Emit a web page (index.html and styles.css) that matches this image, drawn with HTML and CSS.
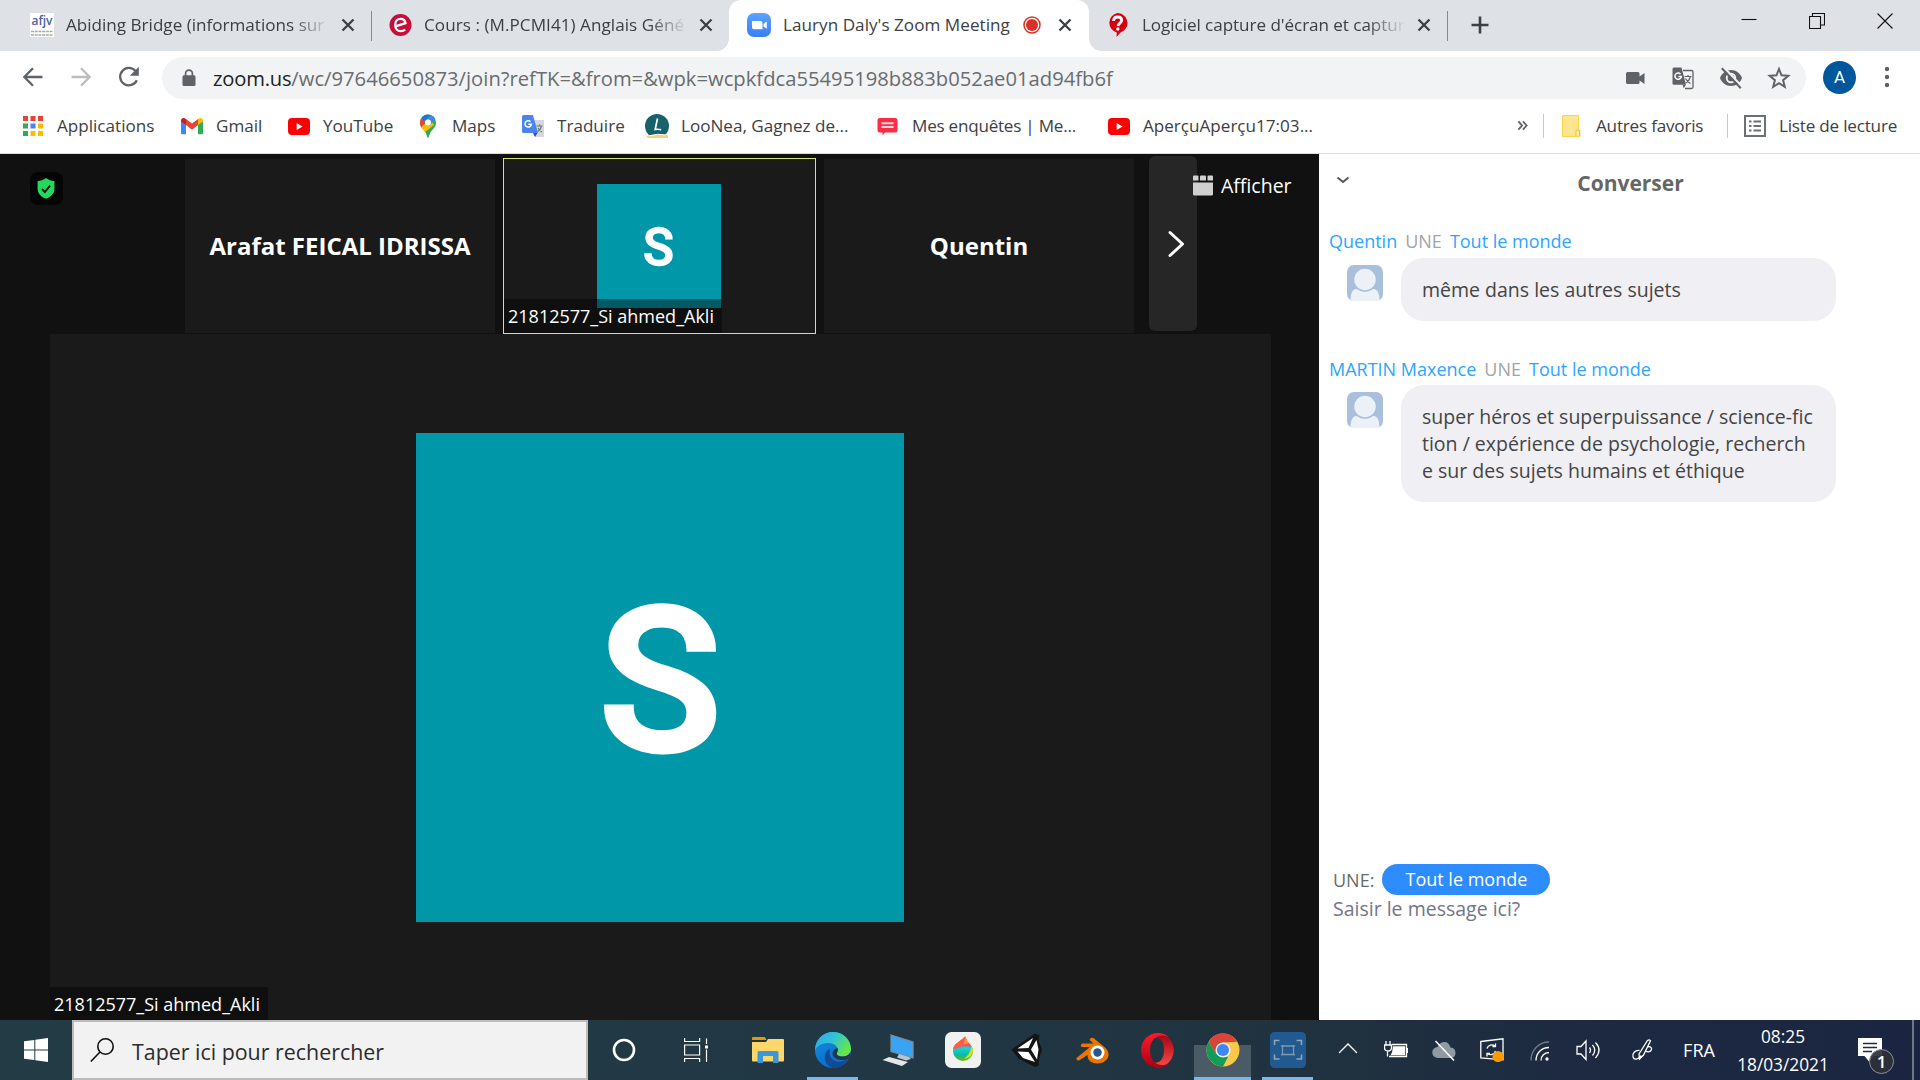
FILE: index.html
```html
<!DOCTYPE html>
<html lang="fr">
<head>
<meta charset="utf-8">
<title>Lauryn Daly's Zoom Meeting</title>
<link rel="stylesheet" href="styles.css">
</head>
<body>
<div class="screen">

<header class="tabstrip">
  <div class="tab tab-first">
    <svg class="fav" viewBox="0 0 24 24"><rect width="24" height="24" fill="#fff"/><text x="12" y="12" text-anchor="middle" class="afjv" textLength="21" lengthAdjust="spacingAndGlyphs">afjv</text><path d="M1 18.5h22M1 22h22" stroke="#a9a9a0" stroke-width="1.4" stroke-dasharray="3 .7"/></svg>
    <span class="title fade">Abiding Bridge (informations sur</span>
    <svg class="close" viewBox="0 0 16 16"><path d="M2.5 2.5l11 11m0-11l-11 11"/></svg>
  </div>
  <div class="tab">
    <svg class="fav" viewBox="0 0 24 24"><circle cx="11.500" cy="12" r="11" fill="#c70d3a"/><path d="M6.500 13.300l10-3.200c-.5-3-2.600-4.300-5-4.300-3.200 0-5.300 2.700-5.300 6.200 0 3.700 2.300 6.100 5.600 6.100 1.900 0 3.300-.6 4.300-1.700" fill="none" stroke="#fff" stroke-width="2.300"/></svg>
    <span class="title fade wide">Cours : (M.PCMI41) Anglais Géné</span>
    <svg class="close" viewBox="0 0 16 16"><path d="M2.5 2.5l11 11m0-11l-11 11"/></svg>
  </div>
  <div class="tab active">
    <svg class="fav" viewBox="0 0 24 24"><defs><linearGradient id="zg" x2="0" y2="1"><stop offset="0" stop-color="#5aa4ff"/><stop offset="1" stop-color="#3a7df6"/></linearGradient></defs><rect width="24" height="24" rx="7" fill="url(#zg)"/><path d="M5 8h8.500q2 0 2 2v6.200H7q-2 0-2-2zM16.500 11l3.300-2.600v7.300l-3.300-2.300z" fill="#fff"/></svg>
    <span class="title current">Lauryn Daly's Zoom Meeting</span>
    <svg class="rec" viewBox="0 0 18 18"><circle cx="9" cy="9" r="8" fill="#fff" stroke="#d93025" stroke-width="1.500"/><circle cx="9" cy="9" r="6" fill="#d93025"/></svg>
    <svg class="close" viewBox="0 0 16 16"><path d="M2.5 2.5l11 11m0-11l-11 11"/></svg>
  </div>
  <div class="tab tab-sep">
    <svg class="fav" viewBox="0 0 24 24"><path d="M10.500 0a10 10 0 0 1 10 10c0 4.500-3 8-7 9.500l-4 4.500.3-4.500A10 10 0 0 1 10.500 0z" fill="#d9000d"/><path d="M6.500 8c.2-2.600 1.800-4 4.200-4 2.300 0 4 1.300 4 3.200 0 2.800-3.500 3-3.700 6" fill="none" stroke="#fff" stroke-width="2.800"/><circle cx="10.800" cy="16" r="1.700" fill="#fff"/></svg>
    <span class="title fade narrow">Logiciel capture d'écran et captur</span>
    <svg class="close" viewBox="0 0 16 16"><path d="M2.5 2.5l11 11m0-11l-11 11"/></svg>
  </div>
  <div class="strip-end">
    <svg class="plus" viewBox="0 0 20 20"><path d="M10 1.500v17M1.500 10h17"/></svg>
    <div class="win">
      <svg viewBox="0 0 16 16"><path d="M.5 6.500h15"/></svg>
      <svg viewBox="0 0 16 16"><path d="M.5 3.500h11v12H.5zM3.500 3.500v-3h12v11.500h-4"/></svg>
      <svg viewBox="0 0 16 16"><path d="M.5.5l15 15m0-15l-15 15"/></svg>
    </div>
  </div>
</header>

<div class="toolbar">
  <svg class="nav" viewBox="0 0 24 24"><path d="M21.500 12H4M12 3.200L3.300 12l8.700 8.800"/></svg>
  <svg class="nav off" viewBox="0 0 24 24"><path d="M2.500 12H20M12 3.200l8.700 8.800-8.700 8.800"/></svg>
  <svg class="nav" viewBox="0 0 24 24"><path d="M19.800 15.200A8.700 8.700 0 1 1 18.500 6"/><path class="solid" d="M21.800 1.800v9h-9z"/></svg>
  <div class="omnibox">
    <svg class="lock" viewBox="0 0 14 18"><path d="M2 6.200h10q1.500 0 1.500 1.500V15.500q0 1.500-1.500 1.500H2Q.5 17 .5 15.500V7.700Q.5 6.200 2 6.200z" fill="#5f6368"/><path d="M3.600 7V4.500a3.400 3.400 0 0 1 6.800 0V7" fill="none" stroke="#5f6368" stroke-width="1.700"/></svg>
    <span class="url"><b>zoom.us</b>/wc/97646650873/join?refTK=&amp;from=&amp;wpk=wcpkfdca55495198b883b052ae01ad94fb6f</span>
    <div class="omni-icons">
      <svg viewBox="0 0 24 24"><path d="M4.500 6H15q1.500 0 1.500 1.500v3L21.500 7v11l-5-3.500v2q0 1.500-1.500 1.500H4.500Q3 18 3 16.500v-9Q3 6 4.500 6z" fill="#5f6368"/></svg>
      <svg viewBox="0 0 24 24"><path d="M12 4.500h8.500q1.500 0 1.500 1.500v15q0 1.500-1.500 1.500H14" fill="none" stroke="#5f6368" stroke-width="1.300"/><path d="M3 1.500h7.500L15 18.800H3q-1.500 0-1.500-1.500V3q0-1.500 1.500-1.500z" fill="#5f6368"/><path d="M11.500 18.800h3.500l-2.300 3.500z" fill="#5f6368"/><path d="M9.500 8a3.200 3.200 0 1 0 .8 2.600H7.300" fill="none" stroke="#fff" stroke-width="1.500"/><path d="M13.500 10.500h7M17 9v1.500M19.500 10.500c-.7 3-2.500 5-4.700 6.500M14.500 12.500c1 2 3 3.800 5 5" fill="none" stroke="#5f6368" stroke-width="1.200"/></svg>
      <svg viewBox="0 0 24 24"><path d="M12 4c5 0 9.300 3.300 11 8-1.700 4.700-6 8-11 8S2.700 16.700 1 12C2.700 7.300 7 4 12 4z" fill="#5f6368"/><circle cx="12" cy="12" r="4.300" fill="none" stroke="#f1f3f4" stroke-width="1.900"/><path d="M4.300.8l19 20" stroke="#f1f3f4" stroke-width="2.200"/><path d="M2.800 2.200l19 20" stroke="#5f6368" stroke-width="2"/></svg>
      <svg viewBox="0 0 24 24"><path d="M12 3l2.500 6.300 6.800.5-5.200 4.400 1.700 6.600-5.800-3.600-5.800 3.600 1.700-6.600-5.200-4.400 6.800-.5z" fill="none" stroke="#5f6368" stroke-width="2"/></svg>
    </div>
  </div>
  <div class="avatar">A</div>
  <svg class="dots" viewBox="0 0 6 22"><circle cx="3" cy="3" r="2.200"/><circle cx="3" cy="11" r="2.200"/><circle cx="3" cy="19" r="2.200"/></svg>
</div>

<nav class="bookmarks">
  <a><svg viewBox="0 0 24 24"><path fill="#ea4335" d="M2 2h5v5H2zM9.500 2h5v5h-5zM17 2h5v5h-5z"/><path fill="#34a853" d="M2 9.500h5v5H2zM2 17h5v5H2z"/><path fill="#4285f4" d="M9.500 9.500h5v5h-5z"/><path fill="#fbbc04" d="M17 9.500h5v5h-5zM9.500 17h5v5h-5zM17 17h5v5h-5z"/></svg>Applications</a>
  <a><svg viewBox="0 0 24 24"><path fill="#4285f4" d="M1 6v13q0 1.300 1.300 1.300H6V10z"/><path fill="#34a853" d="M18 20.300h3.700q1.300 0 1.300-1.300V6l-5 4z"/><path fill="#ea4335" d="M6 5l6 4.600L18 5v6l-6 4.700L6 11z"/><path fill="#c5221f" d="M1 6.500c0-2.700 2.800-3.500 5-1.500v6L1 7.500z"/><path fill="#fbbc04" d="M23 6.500c0-2.700-2.800-3.500-5-1.500v6l5-3.500z"/></svg>Gmail</a>
  <a><svg viewBox="0 0 24 24"><rect x="1" y="4" width="22" height="17" rx="4" fill="#f00"/><path d="M9.700 9v7l5.800-3.500z" fill="#fff"/></svg>YouTube</a>
  <a><svg viewBox="0 0 24 24"><path fill="#34a853" d="M12 24c-.9 0-1-3.500-3-6.200C6.500 14.500 4 12.500 4 8.500a8 8 0 0 1 16 0c0 4-2.500 6-5 9.300-2 2.700-2.100 6.200-3 6.200z"/><path fill="#fbbc04" d="M5 13l8.500-9L18 11l-9 7c-1.500-2-3-3.400-4-5z"/><path fill="#ea4335" d="M5.500 4L10 8l-4.800 5.200C3.800 10.500 3.300 7 5.500 4z"/><path fill="#1a73e8" d="M5.500 4A8 8 0 0 1 14.500.9L8.500 7z"/><path fill="#4285f4" d="M14.500.9A8 8 0 0 1 19.300 5l-6 7-1-6z"/><circle cx="12" cy="8.500" r="3" fill="#fff"/></svg>Maps</a>
  <a><svg viewBox="0 0 24 24"><path fill="#d5d7da" d="M12 6h11v17H14z"/><path fill="#4a84f0" d="M2.500 1H12l5 18H2.500Q1 19 1 17.500v-15Q1 1 2.500 1z"/><path fill="#2a4fc0" d="M12 19h4.500L14 23z"/><path d="M9.500 7.600a3.200 3.200 0 1 0 .9 2.600H7.300" fill="none" stroke="#fff" stroke-width="1.500"/><path d="M15.500 12h6M18.500 10.500V12M20.500 12c-.7 2.500-2 4.500-3.500 5.500M17 14c1 1.500 2.500 3 4 4" fill="none" stroke="#6b7a80" stroke-width="1.200"/></svg>Traduire</a>
  <a><svg viewBox="0 0 24 24"><circle cx="12" cy="12" r="12" fill="#17616a"/><path d="M1 22q11-3 22-.5V24H3z" fill="#f1d27a"/><path d="M4 22q9-3 17-1" stroke="#fff" fill="none"/><path d="M12.500 4.500l-2.300 11q3-.6 6 .3" stroke="#fff" stroke-width="1.700" fill="none"/></svg>LooNea, Gagnez de...</a>
  <a><svg viewBox="0 0 24 24"><path fill="#fb2c45" d="M4 4h15q2.500 0 2.500 2.500V16q0 2.500-2.500 2.500H9L6.500 21.500V18.500H4Q1.500 18.500 1.500 16V6.500Q1.500 4 4 4z"/><path d="M5.500 9.300h12M5.500 13h12" stroke="#ffd9de" stroke-width="1.900"/></svg><span class="tight">Mes enquêtes | Me...</span></a>
  <a><svg viewBox="0 0 24 24"><rect x="1" y="4" width="22" height="17" rx="4" fill="#f00"/><path d="M9.700 9v7l5.800-3.500z" fill="#fff"/></svg><span>AperçuAperçu17:03...</span></a>
  <div class="bm-right">
    <svg class="more" viewBox="0 0 12 12"><path d="M1.500 1.500L5.500 6l-4 4.500M6.500 1.500L10.500 6l-4 4.500"/></svg>
    <i class="vsep"></i>
    <svg class="folder" viewBox="0 0 20 24"><path d="M1.500 1.500h16v15h1.500v6H1.500z" fill="#ffe590" stroke="#fbd54c"/><path d="M15 22v-4.500q0-1.500 1.500-1.500h.5q1.500 0 1.500 1.500V22" fill="#fff0b8" stroke="#e9bd2c"/></svg>
    <span class="bm-other">Autres favoris</span>
    <i class="vsep"></i>
    <svg class="list" viewBox="0 0 22 22"><path d="M1 1h20v20H1z" fill="#fff" stroke="#6b7075" stroke-width="2"/><path d="M5 6.500h2.500M5 11h2.500M5 15.500h2.500M9.500 6.500H17M9.500 11H17M9.500 15.500H17" stroke="#6b7075" stroke-width="2"/></svg>
    <span class="bm-list">Liste de lecture</span>
  </div>
</nav>

<main class="zoom">
  <section class="meeting">
    <div class="filmrow">
      <div class="shield"><svg viewBox="0 0 18 22"><path d="M9 0c2.500 2.200 5.500 3 8.800 3.200v8.300c0 5-4 8.500-8.800 10.300C4.200 20 .2 16.500.2 11.500V3.200C3.500 3 6.500 2.200 9 0z" fill="#23d959"/><path d="M4.800 11.500l3 3.200 5.500-6.700" fill="none" stroke="#0a0a0a" stroke-width="1.900"/></svg></div>
      <div class="tile">Arafat FEICAL IDRISSA</div>
      <div class="tile speaking"><div class="pic small">S</div><span class="nametag">21812577_Si ahmed_Akli</span></div>
      <div class="tile third">Quentin</div>
      <div class="next"><svg viewBox="0 0 18 28"><path d="M3 2.500L15.500 14 3 25.500"/></svg></div>
      <div class="view"><svg viewBox="0 0 20 21"><path d="M0 1.500Q0 .5 1 .5h3.500q1 0 1 1v4H0zM7 1.500q0-1 1-1h4q1 0 1 1v4H7zM14.500 1.500q0-1 1-1H19q1 0 1 1v4h-5.500zM0 7.500h20v11.500q0 1.500-1.500 1.500h-17Q0 20.500 0 19z" fill="#d0d0d0"/></svg>Afficher</div>
    </div>
    <div class="stage"><div class="pic big">S</div><span class="nametag">21812577_Si ahmed_Akli</span></div>
  </section>

  <aside class="chat">
    <div class="chat-head"><svg viewBox="0 0 14 8"><path d="M1.500 1.500L7 6l5.500-4.500"/></svg><h2>Converser</h2></div>
    <div class="msg">
      <p class="who"><em>Quentin</em><span>UNE</span><em>Tout le monde</em></p>
      <div class="line"><svg class="user" viewBox="0 0 36 36"><rect width="36" height="36" rx="7" fill="#a9bfdb"/><path d="M3.500 36c0-7 1.500-12 6-12 2.500 0 5 2.500 8.500 2.500s6-2.500 8.500-2.500c4.500 0 6 5 6 12z" fill="#ebf1f7"/><circle cx="18" cy="14.500" r="11.500" fill="#ebf1f7" stroke="#a9bfdb" stroke-width="1.500"/></svg><div class="bubble">même dans les autres sujets</div></div>
    </div>
    <div class="msg">
      <p class="who"><em>MARTIN Maxence</em><span>UNE</span><em>Tout le monde</em></p>
      <div class="line"><svg class="user" viewBox="0 0 36 36"><rect width="36" height="36" rx="7" fill="#a9bfdb"/><path d="M3.500 36c0-7 1.500-12 6-12 2.500 0 5 2.500 8.500 2.500s6-2.500 8.500-2.500c4.500 0 6 5 6 12z" fill="#ebf1f7"/><circle cx="18" cy="14.500" r="11.500" fill="#ebf1f7" stroke="#a9bfdb" stroke-width="1.500"/></svg><div class="bubble">super héros et superpuissance / science-fic<br>tion / expérience de psychologie, recherch<br>e sur des sujets humains et éthique</div></div>
    </div>
    <div class="compose">
      <div class="to">UNE:<span class="pill">Tout le monde</span></div>
      <div class="placeholder">Saisir le message ici?</div>
    </div>
  </aside>
</main>

<footer class="taskbar">
  <div class="start"><svg viewBox="0 0 24 24"><path fill="#fff" d="M0 3.300l10.300-1.400v9.600H0zM11.300 1.700L24 0v11.500H11.300zM0 12.500h10.300v9.600L0 20.700zM11.300 12.500H24V24l-12.700-1.700z"/></svg></div>
  <div class="search"><svg viewBox="0 0 24 24"><circle cx="15.500" cy="8.500" r="7.700"/><path d="M10 14L.8 23.500"/></svg><span>Taper ici pour rechercher</span></div>
  <div class="apps">
    <div class="app wide"><svg viewBox="0 0 24 24"><circle cx="12" cy="12" r="10" fill="none" stroke="#fff" stroke-width="2.600"/></svg></div>
    <div class="app wide"><svg viewBox="0 0 24 24" fill="none" stroke="#fff" stroke-width="1.200"><path d="M.6 0v3.500h15V0M.6 7h15v10h-15zM.6 24v-3.500h15V24M22.500.5V6M22.500 11.500V24"/><path d="M21 7.500h3v3h-3z" fill="#fff" stroke="none"/></svg></div>
    <div class="app after"><svg class="s36" viewBox="0 0 36 36"><path d="M2 6q0-1 1-1h11q1 0 1.500 1l1 2H2z" fill="#e09b00"/><path d="M2 10h14l2-3h15q1 0 1 1v20.500q0 1-1 1H3q-1 0-1-1z" fill="#fed768"/><path d="M7.500 31V20.500q0-1.500 1.500-1.500h18q1.500 0 1.500 1.500V31h-5.500v-7h-10v7z" fill="#3a96dd"/></svg></div>
    <div class="app run"><svg class="s36" viewBox="0 0 36 36"><defs><linearGradient id="e1" x1="0" y1="0" x2="1" y2=".5"><stop offset="0" stop-color="#2fa9e8"/><stop offset=".5" stop-color="#2fc2d8"/><stop offset="1" stop-color="#66e64a"/></linearGradient><linearGradient id="e2" x1="0" y1="0" x2="0.500" y2="1"><stop offset="0" stop-color="#1191e0"/><stop offset="1" stop-color="#0a6bcb"/></linearGradient></defs><circle cx="18" cy="18" r="18" fill="url(#e2)"/><path d="M14.500 20c0 7 6 11 12 9.500 3-.7 4.500-1.800 6.500-2.800C29.500 33 24 36 18 36c-6.500-1.500-9-8-8-13 .6-3 2.300-5 5-6.500z" fill="#124a97"/><path d="M36 17c0 5-4 7.500-8.500 7.500-3.500 0-5.800-1-5.800-2.500 0-1 1.300-1.500 1.300-4C23 14.500 19 11 13 11 7 11 1.500 14 0 18.500 0 8 8 0 18 0s18 7.500 18 17z" fill="url(#e1)"/><path d="M22 22.500c1 1.500 3 2 5.500 2 3.500 0 6.500-1.500 8-4.500l-1 6.200c-2 1.300-5 1.800-7.500 1.800-5 0-9-2.500-9.500-6 0-2.500 1.500-5 5-6 1.200 3-1.500 4-.5 6.500z" fill="#22384a"/></svg></div>
    <div class="app"><svg class="s36" viewBox="0 0 36 36"><path d="M11 3l22 7v16l-22-6.500z" fill="#39a3f5" stroke="#7e8b99" stroke-width="1.300"/><path d="M19 22l10 3 2 2-5 1.500-9-3z" fill="#b9c4cf"/><path d="M9 25l19 5-6 4-19.500-6z" fill="#e3e7ea"/></svg></div>
    <div class="app"><svg class="s36" viewBox="0 0 36 36"><defs><linearGradient id="m1" x1="0" y1="0" x2="0" y2="1"><stop offset="0" stop-color="#ff6a4a"/><stop offset=".36" stop-color="#ff4b55"/><stop offset=".46" stop-color="#12d6e0"/><stop offset=".75" stop-color="#0fb8a8"/><stop offset="1" stop-color="#74b800"/></linearGradient></defs><rect width="36" height="36" rx="6.500" fill="#f1f1f0"/><path d="M20 4.500c2 3 1.500 4 4 6.500 2.500 2.500 4 5 4 8a10 10 0 0 1-20 0c0-7 7-9 12-14.500z" fill="url(#m1)"/><path d="M20 4.500c2 3 1.500 4 1 6.500-3 1-4 3.500-6 5l-7 1C9 11 15.500 9.500 20 4.500z" fill="#ff5c45"/><path d="M20 4.500c2 3 1.500 4 4 6.500l-6 1.500c1.500-2.500 2.500-5 2-8z" fill="#ff9a3c"/><path d="M28 18c0 6-4 8.500-9 8.500 3-2 6-5 7.500-12 .8 1 1.500 2 1.500 3.500z" fill="#d8e100"/></svg></div>
    <div class="app"><svg class="s36" viewBox="0 0 36 36"><path d="M1.500 17.500L25 1.500l4.500 2-1 5 3.500 9-3 9.500-.5 6.500-3.500 1.500L9 27z" fill="#141414"/><path d="M7.500 16.500L23 6l-4.500 10zM7.500 19.500l11 .5L25 30l-12-4zM21 17.500L26.500 8l2 9.500-1.500 10z" fill="#fff"/></svg></div>
    <div class="app"><svg class="s36" viewBox="0 0 36 36"><path d="M1.500 26L15 15H6.500q-1.500-2 .5-3.500h11.500l-4-3.500q1-3 4-2l12 10c7 7 1 15.500-8 15.500-7 0-10-4-10-8.500L4 28.500q-3 0-2.500-2.500z" fill="#ea7600"/><circle cx="22.500" cy="20.500" r="7" fill="#fff"/><circle cx="22.500" cy="20.500" r="4.200" fill="#265787"/></svg></div>
    <div class="app"><svg class="s36" viewBox="0 0 36 36"><defs><linearGradient id="o1" x2="0" y2="1"><stop offset="0" stop-color="#ff1b2d"/><stop offset="1" stop-color="#a70014"/></linearGradient><linearGradient id="o2" x2="0" y2="1"><stop offset="0" stop-color="#9c0010"/><stop offset="1" stop-color="#ff4b4b"/></linearGradient></defs><path d="M18 1a17 17.300 0 0 1 0 34.500c-5-1-9-3.500-7-6 5 3 13 1 13-11.500S17 5 11 7c0-3 2-5 7-6z" fill="url(#o2)"/><path d="M18 1C8.500 1 1 8.500 1 18.200S8.500 35.500 18 35.500c4 0 7.500-1 10.500-4-9 4.500-18.500-1-18.500-13.300S19.500.5 28.500 5C26 2.500 22 1 18 1z" fill="url(#o1)"/></svg></div>
    <div class="app run lit"><svg class="s36" viewBox="0 0 36 36"><circle cx="18" cy="18" r="16.500" fill="#fcc84a"/><path d="M3.700 9.800A16.500 16.500 0 0 1 32.300 9.800L18 10.500l-7 11.600z" fill="#db4437"/><path d="M3.700 9.800L11 22l6.500 4.500 0 8A16.500 16.500 0 0 1 3.700 9.800z" fill="#0f9d58"/><path d="M11 22l12 3-5 9.500L10 32z" fill="#0f9d58"/><circle cx="18" cy="18" r="7.500" fill="#f3f3f3"/><circle cx="18" cy="18" r="6.100" fill="#4285f4"/></svg></div>
    <div class="app run"><svg class="s36" viewBox="0 0 36 36"><rect width="36" height="36" rx="4.500" fill="#205a91"/><path d="M4.500 13V8.500H9.500M26.500 8.500h5V13M31.500 22.500V27h-5M9.500 27h-5v-4.500" fill="none" stroke="#92a6b8" stroke-width="1.600"/><path d="M12.500 13v10.500M23.500 13v10.500M11 14h14M11 22.500h14" stroke="#8096ab" stroke-width="1.300"/></svg></div>
  </div>
  <div class="tray">
    <div class="t"><svg viewBox="0 0 24 24"><path d="M3 15l9-9 9 9"/></svg></div>
    <div class="t"><svg viewBox="0 0 24 24"><path d="M8 6.500h14.500v12H5M3.500 18.500v-5M23.500 10v5"/><path d="M2 3v3.500M6 3v3.500M.5 7h7v2.500q0 3.500-3.500 3.500T.5 9.500z"/><path d="M9.500 9h11v7.500H7.500l1.200-2z" fill="#fff"/></svg></div>
    <div class="t"><svg viewBox="0 0 24 24"><path d="M6 20a5.500 5.500 0 0 1-.5-11C7 5.500 9.500 4 12.500 4c3 0 5 2 6 5.500 3.500.3 5 2.500 5 5.500s-2 5-5 5z" fill="#8f9aa3" stroke="none"/><path d="M3.500 3L22 22.500" stroke-width="1.500"/></svg></div>
    <div class="t"><svg viewBox="0 0 24 24"><path d="M.8 3.500L23 .8v21L.8 20z"/><path d="M7 10.500a5 5 0 0 1 8-2.500M15.500 5.500V8.500h-3M15.500 13a5 5 0 0 1-8 2.500M7 18.500v-3h3"/><circle cx="18" cy="18.500" r="5.500" fill="#ff9900" stroke="none"/></svg></div>
    <div class="t"><svg viewBox="0 0 24 24"><path d="M3 22.500C3 12.500 10.500 4 21 4" stroke="#6f7c88"/><path d="M8 22.500c0-7.500 5.500-13 13-13M13 22.500c0-4.500 3.500-8 8-8"/><circle cx="19" cy="21" r="1" fill="#fff"/></svg></div>
    <div class="t"><svg viewBox="0 0 24 24"><path d="M1 8.500h4l5-5.500v18.500L5 16H1zM13.500 9.500q2 2.500 0 5.500M16.500 7q4.500 5 0 10.500M19.500 4.500q7 7.500 0 15.500"/></svg></div>
    <div class="t pen"><svg viewBox="0 0 24 24"><path d="M9 16L17.500 2.500q2-1.500 3 .3L13.500 17l-4 4zM9.500 12.500C5 12 2 15.500 3 19c1 3.500 6 2.500 8-1.500M15.500 13c3.500 2 7.500-.5 5.500-3.500-1-1-3-1-4 0"/></svg></div>
    <div class="lang">FRA</div>
    <div class="clock">08:25<br>18/03/2021</div>
    <div class="notif"><svg viewBox="0 0 24 24"><path d="M0 0h24v18h-8l-5 5.500L6.500 18H0z" fill="#fff"/><path d="M5 5.500h14M5 9.500h14M5 13.500h9" stroke="#1e2b3e" stroke-width="1.300"/></svg><span class="badge">1</span></div>
  </div>
</footer>
</div>
</body>
</html>
```
FILE: styles.css
```css
* { box-sizing: border-box; }
body {
  margin: 0;
  font-family: "Open Sans", "Noto Sans", sans-serif;
  overflow: hidden;
}
svg { display: block; flex: none; }
.screen {
  width: 1920px;
  height: 1080px;
  display: flex;
  flex-direction: column;
  background: #fff;
}

/* Tab strip */
.tabstrip {
  height: 51px;
  flex: none;
  display: grid;
  grid-template-columns: 371px 358px 360px 358px 1fr;
  background: #dee1e6;
  font-size: 17.100px;
  color: #3c4043;
}
.tab {
  position: relative;
  display: flex;
  align-items: center;
  padding: 0 15px 0 18px;
}
.tab-first { padding-left: 30px; }
.tab-first::after, .tab-sep::after {
  content: "";
  position: absolute;
  right: -1px;
  top: 11px;
  width: 1px;
  height: 30px;
  background: #85888d;
}
.tab.active {
  background: #fff;
  border-radius: 12px 12px 0 0;
}
.tab.active::before, .tab.active::after {
  content: "";
  position: absolute;
  bottom: 0;
  width: 12px;
  height: 12px;
}
.tab.active::before { left: -12px; background: radial-gradient(circle at 0 0, transparent 11.500px, #fff 12px); }
.tab.active::after { right: -12px; background: radial-gradient(circle at 100% 0, transparent 11.500px, #fff 12px); }
.fav { width: 24px; height: 24px; margin-right: 12px; margin-bottom: 1px; }
.afjv { font: 600 12.500px "Open Sans", sans-serif; fill: #4a62a0; }
.title { white-space: nowrap; padding-bottom: 2px; }
.title.fade {
  width: 260px;
  overflow: hidden;
  -webkit-mask-image: linear-gradient(90deg, #000 225px, transparent 264px);
  mask-image: linear-gradient(90deg, #000 225px, transparent 264px);
}
.title.wide { letter-spacing: .050px; margin-left: -1px; }
.title.narrow { letter-spacing: -.060px; margin-left: -1px; width: 264px; }
.title.current { letter-spacing: .040px; }
.rec { width: 18px; height: 18px; margin-left: 13px; margin-bottom: 1px; }
.close { width: 16px; height: 16px; margin-left: auto; margin-bottom: 1px; }
.tab.active .close { margin-right: 1px; }
.close path { stroke: #3c4043; stroke-width: 2.300; }
.strip-end { display: flex; justify-content: space-between; padding: 15px 27px 0 23px; }
.plus { width: 20px; height: 20px; }
.plus path { stroke: #3c4043; stroke-width: 2.600; fill: none; }
.win { display: flex; gap: 52px; margin-top: -2px; }
.win svg { width: 16px; height: 16px; }
.win path { fill: none; stroke: #111; stroke-width: 1.100; }

/* Address bar */
.toolbar {
  height: 52px;
  flex: none;
  display: flex;
  align-items: center;
  padding-left: 21px;
}
.nav { width: 24px; height: 24px; margin-right: 24px; }
.nav:nth-child(3) { margin-right: 21px; }
.nav path { fill: none; stroke: #5f6368; stroke-width: 2.300; }
.nav.off path { stroke: #babcbe; }
.nav .solid { fill: #5f6368; stroke: none; }
.omnibox {
  width: 1644px;
  height: 42px;
  margin-top: 2px;
  border-radius: 21px;
  background: #f1f3f4;
  display: flex;
  align-items: center;
  padding: 0 15px 0 20px;
}
.lock { width: 14px; height: 18px; margin-right: 17px; }
.url { font-size: 20.200px; color: #696c70; white-space: nowrap; line-height: 28px; letter-spacing: .010px; }
.url b { font-weight: 400; color: #202124; letter-spacing: -.200px; }
.omni-icons { display: flex; gap: 24px; margin-left: auto; }
.omni-icons svg { width: 24px; height: 24px; }
.avatar {
  width: 33px;
  height: 33px;
  margin-left: 17px;
  border-radius: 50%;
  background: #01579b;
  color: #fff;
  font: 17px/33px Roboto, sans-serif;
  text-align: center;
}
.dots { width: 6px; height: 22px; margin-left: 28px; fill: #5f6368; }

/* Bookmarks */
.bookmarks {
  height: 51px;
  flex: none;
  border-bottom: 1px solid #dadce0;
  display: grid;
  grid-template-columns: 159px 107px 129px 105px 124px 231px 231px 220px 1fr;
  padding: 0 21px 5px 21px;
  font-size: 17.100px;
  color: #3c4043;
}
.bookmarks a { display: flex; align-items: center; gap: 12px; white-space: nowrap; }
.bookmarks .tight { letter-spacing: -.240px; }
.bookmarks svg { width: 24px; height: 24px; }
.bm-right { display: flex; align-items: center; justify-content: flex-end; letter-spacing: -.200px; white-space: nowrap; }
.bookmarks .more { width: 11px; height: 11px; margin-right: 15px; }
.more path { fill: none; stroke: #5f6368; stroke-width: 2; }
.vsep { width: 1px; height: 24px; background: #c5c8cc; }
.bookmarks .folder { width: 20px; margin: 0 15px 0 17px; }
.bm-other { width: 131px; }
.bookmarks .list { width: 22px; height: 22px; margin: 0 13px 0 16px; }
.bm-list { width: 120px; }

/* Meeting */
.zoom { height: 866px; flex: none; display: grid; grid-template-columns: 1319px 1fr; }
.meeting { background: #111; display: flex; flex-direction: column; }
.filmrow { position: relative; height: 180px; flex: none; display: flex; }
.shield {
  width: 33px;
  height: 33px;
  margin: 18px 122px 0 30px;
  border-radius: 8px;
  background: #050505;
  display: grid;
  place-items: center;
}
.shield svg { width: 18px; height: 21px; margin-right: 1px; }
.tile {
  width: 310px;
  height: 174px;
  margin: 5px 8px 0 0;
  padding-bottom: 2px;
  background: #1a1a1a;
  color: #fff;
  font-size: 24px;
  font-weight: 700;
  display: flex;
  align-items: center;
  justify-content: center;
}
.speaking {
  position: relative;
  width: 313px;
  height: 176px;
  margin-top: 4px;
  padding: 0 2px 0 0;
  border: 1px solid #d4e66f;
}
.third { margin-right: 15px; }
.pic {
  background: #0097a8;
  color: #fff;
  font-family: Roboto, sans-serif;
  font-weight: 500;
  display: flex;
  align-items: center;
  justify-content: center;
}
.pic.small { width: 124px; height: 124px; font-size: 51px; padding-top: 2px; -webkit-text-stroke: 1.300px #fff; }
.pic.big { width: 488px; height: 489px; font-size: 201px; padding-top: 8px; -webkit-text-stroke: 5px #fff; }
.nametag {
  position: absolute;
  left: 0;
  bottom: 0;
  height: 34px;
  padding: 0 8px 0 4px;
  background: rgba(0, 0, 0, .4);
  color: #fff;
  font-size: 18px;
  font-weight: 400;
  line-height: 34px;
  white-space: nowrap;
}
.next {
  width: 48px;
  height: 175px;
  margin-top: 2px;
  border-radius: 6px;
  background: #262626;
  display: grid;
  place-items: center;
}
.next svg { width: 18px; height: 28px; margin-left: 6px; }
.next path { fill: none; stroke: #fff; stroke-width: 3; stroke-linecap: round; stroke-linejoin: round; }
.view {
  position: absolute;
  left: 1193px;
  top: 18px;
  display: flex;
  align-items: center;
  gap: 8px;
  color: #fff;
  font-size: 19.500px;
}
.view svg { width: 20px; height: 21px; }
.stage {
  position: relative;
  width: 1221px;
  flex: 1;
  margin-left: 50px;
  background: #1a1a1a;
  display: flex;
  padding: 99px 0 0 366px;
}
.stage .nametag { height: 33px; line-height: 35px; }

/* Chat */
.chat { display: flex; flex-direction: column; background: #fff; }
.chat-head { position: relative; height: 75px; display: flex; justify-content: center; padding: 15px 0 0 22px; }
.chat-head svg { position: absolute; left: 17px; top: 22px; width: 14px; height: 8px; }
.chat-head path { fill: none; stroke: #555; stroke-width: 1.900; }
.chat-head h2 { margin: 0; font-size: 21px; line-height: 29px; color: #666; }
.msg { padding: 0 84px 36px 10px; }
.who { margin: 0; height: 29px; display: flex; gap: 8px; font-size: 18px; line-height: 24px; color: #a3a3a8; }
.msg + .msg .who { height: 28px; }
.who em { font-style: normal; color: #2da5ff; }
.line { display: flex; align-items: flex-start; padding-left: 18px; }
.user { width: 36px; height: 36px; margin: 7px 18px 0 0; }
.bubble {
  flex: 1;
  padding: 18px 20px 18px 21px;
  border-radius: 23px;
  background: #efeff4;
  color: #444;
  font-size: 19.500px;
  line-height: 27px;
  white-space: nowrap;
}
.compose { margin: auto 0 98px 14px; color: #747487; }
.to { display: flex; align-items: center; height: 31px; font-size: 18px; color: #6a6a6a; }
.pill {
  width: 168px;
  margin-left: 8px;
  border-radius: 16px;
  background: #2d8cff;
  color: #fff;
  line-height: 31px;
  text-align: center;
}
.placeholder { font-size: 19.500px; line-height: 27px; }

/* Taskbar */
.taskbar {
  height: 60px;
  flex: none;
  display: flex;
  background: linear-gradient(90deg, #233b45 0, #213844 45%, #20323f 68%, #1d2a41 82%, #1b2541 100%);
  color: #fff;
}
.start { width: 72px; display: grid; place-items: center; }
.start svg { width: 24px; height: 24px; }
.search {
  width: 516px;
  border: 2px solid #bcbcbc;
  background: #f2f2f2;
  color: #2b2b2b;
  font-size: 21.400px;
  display: flex;
  align-items: center;
  gap: 18px;
  padding-left: 16px;
}
.search span { padding-top: 2px; }
.search svg { width: 24px; height: 24px; }
.search svg * { fill: none; stroke: #111; stroke-width: 1.600; }
.apps { display: flex; }
.app {
  position: relative;
  width: 65px;
  display: grid;
  place-items: center;
}
.app.wide { width: 72px; }
.app.after { margin-left: 3px; }
.app svg { width: 24px; height: 24px; }
.app .s36 { position: relative; width: 36px; height: 36px; }
.app.run::after {
  content: "";
  position: absolute;
  left: 7px;
  right: 7px;
  bottom: 0;
  height: 3px;
  background: #76b9ed;
}
.app.lit::before {
  content: "";
  position: absolute;
  inset: 25px 4px 0;
  background: #4b5b66;
}
.app.lit::after { left: 4px; right: 4px; }
.tray { margin-left: auto; display: flex; align-items: center; font-size: 17.300px; }
.t { width: 48px; display: grid; place-items: center; }
.t.pen { width: 59px; }
.t svg { width: 24px; height: 24px; fill: none; stroke: #fff; stroke-width: 1.300; }
.lang { width: 56px; text-align: center; font-size: 18px; }
.clock { width: 112px; line-height: 28px; text-align: center; padding-top: 1px; }
.notif { position: relative; width: 81px; height: 60px; padding: 18px 0 0 19px; }
.notif::after { content: ""; position: absolute; right: 6px; top: 0; width: 2px; height: 60px; background: #6f7788; }
.notif svg { width: 24px; height: 24px; }
.badge {
  position: absolute;
  left: 30px;
  top: 29px;
  width: 25px;
  height: 25px;
  border: 1px solid #8b8f98;
  border-radius: 50%;
  background: rgba(45, 48, 56, .93);
  font-size: 17px;
  font-weight: 600;
  line-height: 23px;
  text-align: center;
}
```
